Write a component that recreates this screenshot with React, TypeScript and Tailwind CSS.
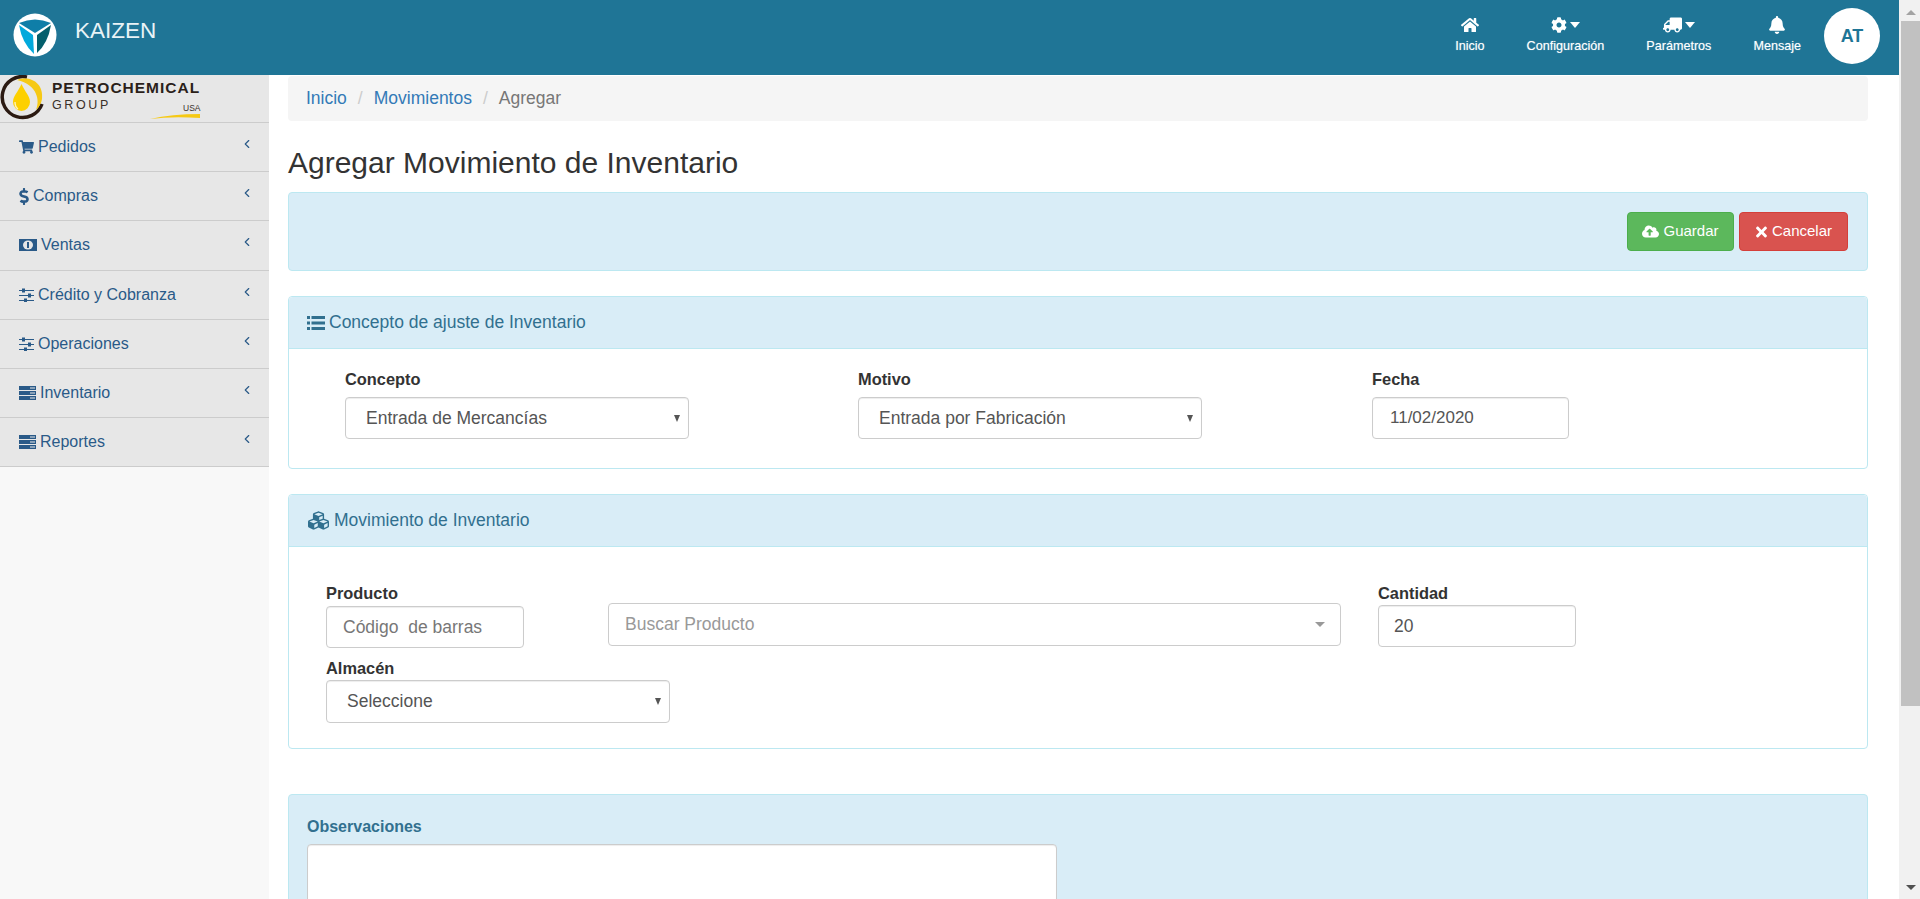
import { ReactNode } from "react";
import {
  FaBell,
  FaCloudUploadAlt,
  FaCog,
  FaCubes,
  FaDollarSign,
  FaHome,
  FaShoppingCart,
  FaTimes,
  FaTruck,
} from "react-icons/fa";
import { FiChevronLeft } from "react-icons/fi";

const SANS = "font-['Liberation_Sans',Arial,sans-serif]";

function MoneyIcon() {
  return (
    <svg viewBox="0 0 18 12" className="w-[18px] h-[12px]" fill="currentColor">
      <rect width="18" height="12" />
      <ellipse cx="9" cy="6" rx="5" ry="4.6" fill="#e7e7e7" />
      <rect x="8" y="3" width="2" height="6" />
    </svg>
  );
}

function SlidersIcon() {
  return (
    <svg viewBox="0 0 15 14" className="w-[15px] h-[14px]" fill="currentColor">
      <rect x="0" y="2" width="15" height="1" />
      <rect x="3" y="0.5" width="3" height="4" />
      <rect x="0" y="7" width="15" height="1" />
      <rect x="9" y="5.5" width="3" height="4" />
      <rect x="0" y="12" width="15" height="1" />
      <rect x="5" y="10.5" width="3" height="3.5" />
    </svg>
  );
}

function RowsIcon() {
  return (
    <svg viewBox="0 0 17 14" className="w-[17px] h-[14px]" fill="currentColor">
      <rect width="17" height="4" />
      <rect y="5" width="17" height="4" />
      <rect y="10" width="17" height="4" />
      <rect x="11" y="1.5" width="5" height="1" fill="#e7e7e7" />
      <rect x="11" y="6.5" width="5" height="1" fill="#e7e7e7" />
      <rect x="11" y="11.5" width="5" height="1" fill="#e7e7e7" />
    </svg>
  );
}

function ListIcon() {
  return (
    <svg viewBox="0 0 18 14" className="w-[18px] h-[14px]" fill="currentColor">
      <rect width="3" height="3" />
      <rect x="4.5" width="13.5" height="3" />
      <rect y="5.5" width="3" height="3" />
      <rect x="4.5" y="5.5" width="13.5" height="3" />
      <rect y="11" width="3" height="3" />
      <rect x="4.5" y="11" width="13.5" height="3" />
    </svg>
  );
}

const MENU: { label: string; icon: ReactNode }[] = [
  { label: "Pedidos", icon: <FaShoppingCart className="w-[15px] h-[14px]" /> },
  { label: "Compras", icon: <FaDollarSign className="w-[10px] h-[17px]" /> },
  { label: "Ventas", icon: <MoneyIcon /> },
  { label: "Crédito y Cobranza", icon: <SlidersIcon /> },
  { label: "Operaciones", icon: <SlidersIcon /> },
  { label: "Inventario", icon: <RowsIcon /> },
  { label: "Reportes", icon: <RowsIcon /> },
];

function KaizenLogo() {
  return (
    <svg viewBox="0 0 44 44" className="w-[44px] h-[44px] shrink-0">
      <circle cx="22" cy="22" r="21.5" fill="#fff" />
      <path d="M6 10 Q22 3 38 10 L22 20 Z" fill="#0f7ea8" />
      <path d="M6 12 L20 22 L21 41 Q9 30 6 12 Z" fill="#02a9dc" />
      <path d="M38 12 L24 22 L24 40 Q35 30 38 12 Z" fill="#045f6c" />
    </svg>
  );
}

function NavItem({ icon, label, caret, className }: { icon: ReactNode; label: string; caret?: boolean; className: string }) {
  return (
    <div className={`flex flex-col items-center text-white ${className}`}>
      <div className="flex items-center h-[18px]">
        {icon}
        {caret && <span className="ml-[3px] w-0 h-0 border-x-[5.5px] border-x-transparent border-t-[6px] border-t-white" />}
      </div>
      <span className="text-[12.6px] leading-[16px] mt-[4px] whitespace-nowrap [text-shadow:0_0_1px_rgba(255,255,255,0.5)]">{label}</span>
    </div>
  );
}

function Header() {
  return (
    <header className="h-[75px] bg-[#1f7596] flex items-start shrink-0">
      <div className="ml-[13px] mt-[13px]">
        <KaizenLogo />
      </div>
      <span className="ml-[18px] mt-[18px] text-[22.5px] leading-[26px] text-[#e9f3f6]">KAIZEN</span>
      <div className="ml-auto flex items-start mt-[16px]">
        <NavItem label="Inicio" icon={<FaHome className="w-[18px] h-[16px]" />} className="mr-[42px]" />
        <NavItem label="Configuración" icon={<FaCog className="w-[16px] h-[16px]" />} caret className="mr-[42px]" />
        <NavItem label="Parámetros" icon={<FaTruck className="w-[19px] h-[16px] -scale-x-100" />} caret className="mr-[42px]" />
        <NavItem label="Mensaje" icon={<FaBell className="w-[16px] h-[18px]" />} className="" />
      </div>
      <div className="ml-[23px] mr-[19px] mt-[8px] w-[56px] h-[56px] rounded-full bg-white flex items-center justify-center text-[#1f7596] text-[18px] font-bold">
        AT
      </div>
    </header>
  );
}

function PetroLogo() {
  return (
    <div className="h-[47px] relative overflow-hidden">
      <svg viewBox="0 0 210 47" className="absolute left-0 top-0 w-[210px] h-[47px]">
        <path d="M27 2 A20.5 20.5 0 1 0 42 29" fill="none" stroke="#2b1a12" strokeWidth="3.5" />
        <path d="M17 5 C30 0 44 8 42 24 C41 30 38 33 36 35 C40 26 38 10 17 5 Z" fill="#f6c915" />
        <path d="M21.5 9 C25 17 30 21 30 27 A8.5 9 0 0 1 13 27 C13 21 18 17 21.5 9 Z" fill="#fdd000" />
        <path d="M15 27 Q15 32 18 34" fill="none" stroke="#fff4b8" strokeWidth="1.4" />
        <path d="M150 44 Q172 39 200 39 L200 43 Q172 41 150 44 Z" fill="#f6c915" />
      </svg>
      <span className="absolute left-[52px] top-[3px] text-[15.5px] leading-[20px] font-bold tracking-[1px] text-[#2b1f1a]">PETROCHEMICAL</span>
      <span className="absolute left-[52px] top-[23px] text-[12.5px] leading-[14px] tracking-[2.6px] text-[#3a3029]">GROUP</span>
      <span className="absolute left-[183px] top-[28px] text-[8.5px] leading-[10px] text-[#3a3029]">USA</span>
    </div>
  );
}

function Sidebar() {
  return (
    <aside className="w-[269px] shrink-0 bg-[#f8f8f8]">
      <div className="bg-[#e7e7e7]">
        <PetroLogo />
        {MENU.map((item) => (
          <div
            key={item.label}
            className="h-[49.2px] border-t border-[#cccccc] last:border-b last:h-[50px] pl-[19px] pr-[15px] flex items-center text-[#2a5a88] text-[16px]"
          >
            <span className="flex items-center gap-[4px]">
              {item.icon}
              {item.label}
            </span>
            <FiChevronLeft className="ml-auto w-[14px] h-[14px] -mt-[6px]" />
          </div>
        ))}
      </div>
    </aside>
  );
}

function FieldLabel({ children }: { children: ReactNode }) {
  return <div className="text-[16.4px] leading-[20px] font-bold text-[#333333]">{children}</div>;
}

const CONTROL = "border border-[#cccccc] rounded-[4px] bg-white flex items-center text-[17.5px] text-[#555555] shadow-[inset_0_1px_1px_rgba(0,0,0,0.075)]";

function SelectBox({ value, className }: { value: string; className: string }) {
  return (
    <div className={`${CONTROL} pl-[20px] pr-[8px] justify-between ${className}`}>
      <span>{value}</span>
      <span className="w-0 h-0 border-x-[3.5px] border-x-transparent border-t-[7px] border-t-[#555555]" />
    </div>
  );
}

function PanelHeader({ icon, title }: { icon: ReactNode; title: string }) {
  return (
    <div className="h-[52px] bg-[#d9edf7] border-b border-[#bce8f1] rounded-t-[4px] flex items-center pl-[18px] gap-[4px] text-[17.5px] text-[#31708f]">
      {icon}
      {title}
    </div>
  );
}

function Content() {
  return (
    <main className="w-[1580px] ml-[19px] shrink-0">
      <nav className="mt-[1px] h-[45px] bg-[#f5f5f5] rounded-[4px] flex items-center pl-[18px] text-[17.5px]">
        <span className="text-[#337ab7]">Inicio</span>
        <span className="text-[#cccccc] mx-[11px]">/</span>
        <span className="text-[#337ab7]">Movimientos</span>
        <span className="text-[#cccccc] mx-[11px]">/</span>
        <span className="text-[#777777]">Agregar</span>
      </nav>

      <h1 className="mt-[25px] text-[30px] leading-[33px] text-[#333333]">Agregar Movimiento de Inventario</h1>

      <section className="mt-[13px] h-[79px] bg-[#d9edf7] border border-[#bce8f1] rounded-[4px] flex items-center justify-end gap-[5px] pr-[19px]">
        <button className="h-[39px] w-[107px] bg-[#5cb85c] border border-[#4cae4c] rounded-[4px] text-white text-[15px] flex items-center justify-center gap-[4px]">
          <FaCloudUploadAlt className="w-[17px] h-[15px]" />
          Guardar
        </button>
        <button className="h-[39px] w-[109px] bg-[#d9534f] border border-[#d43f3a] rounded-[4px] text-white text-[15px] flex items-center justify-center gap-[4px]">
          <FaTimes className="w-[13px] h-[16px]" />
          Cancelar
        </button>
      </section>

      <section className="mt-[25px] h-[173px] border border-[#bce8f1] rounded-[4px]">
        <PanelHeader icon={<ListIcon />} title="Concepto de ajuste de Inventario" />
        <div className="pl-[56px] pt-[20px] flex">
          <div className="w-[513px]">
            <FieldLabel>Concepto</FieldLabel>
            <SelectBox value="Entrada de Mercancías" className="mt-[8px] w-[344px] h-[42px]" />
          </div>
          <div className="w-[514px]">
            <FieldLabel>Motivo</FieldLabel>
            <SelectBox value="Entrada por Fabricación" className="mt-[8px] w-[344px] h-[42px]" />
          </div>
          <div>
            <FieldLabel>Fecha</FieldLabel>
            <div className={`${CONTROL} mt-[8px] w-[197px] h-[42px] pl-[17px] text-[17px]`}>11/02/2020</div>
          </div>
        </div>
      </section>

      <section className="mt-[25px] h-[255px] border border-[#bce8f1] rounded-[4px]">
        <PanelHeader icon={<FaCubes className="w-[23px] h-[21px] -my-[2px]" />} title="Movimiento de Inventario" />
        <div className="pl-[37px] pt-[36px] flex">
          <div className="w-[282px]">
            <FieldLabel>Producto</FieldLabel>
            <div className={`${CONTROL} mt-[3px] w-[198px] h-[42px] pl-[16px] text-[#777777] whitespace-pre`}>Código  de barras</div>
            <div className="mt-[10px]">
              <FieldLabel>Almacén</FieldLabel>
            </div>
            <SelectBox value="Seleccione" className="mt-[2px] w-[344px] h-[43px]" />
          </div>
          <div className="w-[770px] pt-[20px]">
            <div className="w-[733px] h-[43px] border border-[#cccccc] rounded-[4px] bg-white flex items-center justify-between pl-[16px] pr-[15px] text-[17.5px] text-[#999999]">
              Buscar Producto
              <span className="w-0 h-0 border-x-[5px] border-x-transparent border-t-[5px] border-t-[#999999]" />
            </div>
          </div>
          <div>
            <FieldLabel>Cantidad</FieldLabel>
            <div className={`${CONTROL} mt-[2px] w-[198px] h-[42px] pl-[15px]`}>20</div>
          </div>
        </div>
      </section>

      <section className="mt-[45px] h-[140px] bg-[#d9edf7] border border-[#bce8f1] rounded-[4px] pl-[18px] pt-[22px]">
        <div className="text-[16px] leading-[20px] font-bold text-[#31708f]">Observaciones</div>
        <div className={`${CONTROL} mt-[7px] w-[750px] h-[120px]`} />
      </section>
    </main>
  );
}

function Scrollbar() {
  return (
    <div className="w-[21px] ml-auto shrink-0 h-full bg-[#f1f1f1] pl-[2px] flex flex-col items-center">
      <div className="h-[21px] w-full pt-[3px] flex items-center justify-center">
        <span className="w-0 h-0 border-x-[5px] border-x-transparent border-b-[5px] border-b-[#a3a3a3]" />
      </div>
      <div className="w-full h-[685px] bg-[#c1c1c1]" />
      <div className="mt-auto h-[21px] w-full pb-[3px] flex items-center justify-center">
        <span className="w-0 h-0 border-x-[5px] border-x-transparent border-t-[5px] border-t-[#505050]" />
      </div>
    </div>
  );
}

export default function App() {
  return (
    <div className={`h-[899px] w-[1920px] overflow-hidden flex bg-white ${SANS}`}>
      <div className="w-[1899px] shrink-0 flex flex-col">
        <Header />
        <div className="flex flex-1 min-h-0 overflow-hidden">
          <Sidebar />
          <Content />
        </div>
      </div>
      <Scrollbar />
    </div>
  );
}
